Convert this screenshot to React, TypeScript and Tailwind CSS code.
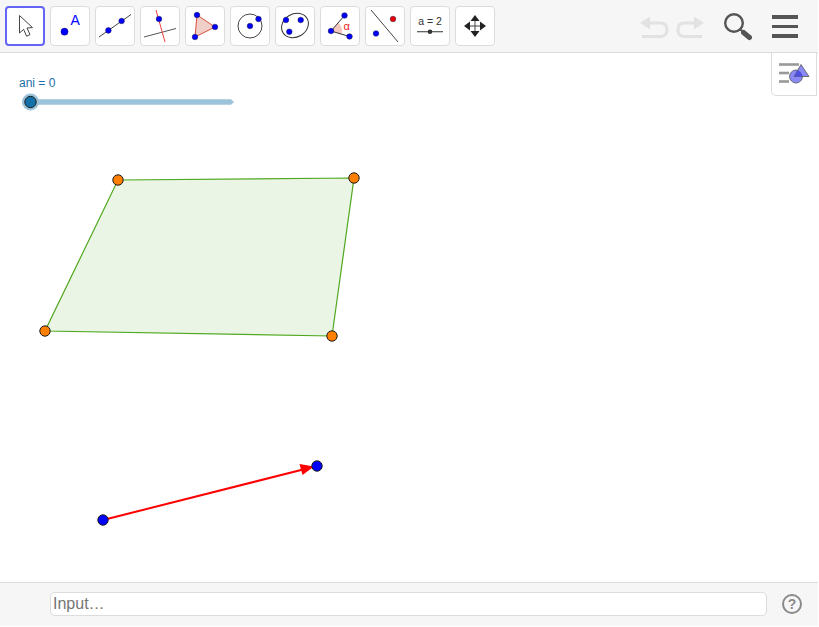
import type { ReactNode } from "react";

const BLUE = "#0000ff";

function Dot({ x, y, r = 2.8, fill = BLUE }: { x: number; y: number; r?: number; fill?: string }) {
  return <circle cx={x} cy={y} r={r} fill={fill} stroke="#1a1a40" strokeWidth={0.5} />;
}

// Toolbar icons, all drawn in a 40x40 box
const toolIcons: ReactNode[] = [
  <path key="move" d="M14.5 9.5 L14.5 27 L18.6 23.4 L21.6 30.2 L25 28.6 L22 22 L27.5 21.6 Z" fill="#fff" stroke="#444" strokeWidth={1} strokeLinejoin="round" />,
  <g key="point">
    <circle cx={14.5} cy={25.7} r={3.6} fill={BLUE} stroke="#1a1a40" strokeWidth={0.4} />
    <text x={20.5} y={19} fontSize={14} fill={BLUE} fontFamily="Liberation Sans, sans-serif">A</text>
  </g>,
  <g key="line">
    <line x1={4} y1={31} x2={36} y2={8.5} stroke="#444" strokeWidth={1} />
    <Dot x={13.4} y={24.4} />
    <Dot x={26.6} y={15} />
  </g>,
  <g key="perp">
    <line x1={4} y1={31} x2={36} y2={22.5} stroke="#555" strokeWidth={1} />
    <line x1={16} y1={4} x2={25} y2={36} stroke="#f04040" strokeWidth={1} />
    <Dot x={19} y={13} />
  </g>,
  <g key="polygon">
    <path d="M12 9 L30 21 L10 31 Z" fill="#f0cfc8" stroke="#d9503a" strokeWidth={1} />
    <Dot x={12} y={9} />
    <Dot x={30} y={21} />
    <Dot x={10} y={31} />
  </g>,
  <g key="circle">
    <circle cx={20} cy={20} r={12} fill="none" stroke="#444" strokeWidth={1} />
    <Dot x={20} y={20} />
    <Dot x={28.5} y={13} />
  </g>,
  <g key="conic">
    <ellipse cx={20} cy={19.5} rx={14} ry={11.5} transform="rotate(-30 20 19.5)" fill="none" stroke="#333" strokeWidth={1} />
    <Dot x={11} y={14} />
    <Dot x={25.7} y={14} />
    <Dot x={14.3} y={25.7} />
  </g>,
  <g key="angle">
    <path d="M11 25 L18.2 16.7 A11 11 0 0 1 21.5 28.1 Z" fill="#f4c8c0" stroke="none" />
    <line x1={11} y1={25} x2={24.5} y2={9.5} stroke="#333" strokeWidth={1} />
    <line x1={11} y1={25} x2={29.5} y2={30.5} stroke="#333" strokeWidth={1} />
    <Dot x={11} y={25} />
    <Dot x={24.5} y={9.5} />
    <Dot x={29.5} y={30.5} />
    <text x={23.5} y={23.5} fontSize={11} fill="#ee2222" fontFamily="Liberation Sans, sans-serif">α</text>
  </g>,
  <g key="mirror">
    <line x1={6} y1={4} x2={33} y2={36} stroke="#444" strokeWidth={1} />
    <Dot x={28} y={13} fill="#ee0000" />
    <Dot x={11} y={27.5} />
  </g>,
  <g key="slider">
    <text x={20} y={18.5} fontSize={10.5} fill="#333" textAnchor="middle" fontFamily="Liberation Sans, sans-serif">a = 2</text>
    <line x1={7} y1={25.7} x2={33} y2={25.7} stroke="#555" strokeWidth={1.2} />
    <circle cx={20} cy={25.7} r={2.3} fill="#333" />
  </g>,
  <g key="pan" fill="#222">
    <line x1={20} y1={13} x2={20} y2={27} stroke="#444" strokeWidth={1} />
    <line x1={13} y1={20} x2={27} y2={20} stroke="#444" strokeWidth={1} />
    <path d="M20 9 L24.5 15 L15.5 15 Z" />
    <path d="M20 31 L24.5 25 L15.5 25 Z" />
    <path d="M9 20 L15 15.5 L15 24.5 Z" />
    <path d="M31 20 L25 15.5 L25 24.5 Z" />
  </g>,
];

function ToolButton({ active, children }: { active?: boolean; children: ReactNode }) {
  return (
    <button
      className={
        active
          ? "h-10 w-10 shrink-0 rounded-[4px] border-2 border-[#6565f5] bg-white"
          : "h-10 w-10 shrink-0 rounded-[4px] border border-[#dcdcdc] bg-white"
      }
    >
      <svg viewBox="0 0 40 40" className={active ? "-m-[2px] h-10 w-10" : "-m-px h-10 w-10"}>
        {children}
      </svg>
    </button>
  );
}

function Toolbar() {
  return (
    <div className="flex h-[53px] shrink-0 items-start border-b border-[#dcdcdc] bg-[#f6f6f6] pl-[5px] pt-[6px]">
      <div className="flex gap-[5px]">
        {toolIcons.map((icon, i) => (
          <ToolButton key={i} active={i === 0}>
            {icon}
          </ToolButton>
        ))}
      </div>
      <div className="ml-auto flex items-start pr-[20px]">
        <svg width="64" height="22" viewBox="0 0 64 22" className="mt-[10px]" fill="none">
          <path d="M8 7 H20 Q27 7 27 13.7 Q27 20.5 20 20.5 H2" stroke="#e2e2e2" strokeWidth={3} />
          <path d="M0 7 L10 0.5 L10 13.5 Z" fill="#e2e2e2" />
          <path d="M56 7 H44 Q38 7 38 13.7 Q38 20.5 44 20.5 H62" stroke="#e2e2e2" strokeWidth={3} />
          <path d="M64 7 L54 0.5 L54 13.5 Z" fill="#e2e2e2" />
        </svg>
        <svg width="28" height="28" viewBox="0 0 28 28" className="ml-[20px] mt-[7px]" fill="none">
          <circle cx={10} cy={10} r={8.8} stroke="#555" strokeWidth={2.4} />
          <line x1={16.5} y1={16.5} x2={19} y2={19} stroke="#555" strokeWidth={2} />
          <line x1={19.5} y1={19.5} x2={25.5} y2={24.5} stroke="#555" strokeWidth={5} strokeLinecap="round" />
        </svg>
        <div className="ml-[20px] mt-[9px] flex w-[26px] flex-col gap-[6px]">
          <div className="h-[3.5px] bg-[#555]" />
          <div className="h-[3.5px] bg-[#555]" />
          <div className="h-[3.5px] bg-[#555]" />
        </div>
      </div>
    </div>
  );
}

function GeoPoint({ x, y, fill }: { x: number; y: number; fill: string }) {
  return <circle cx={x} cy={y} r={5.2} fill={fill} stroke="#1c1c1c" strokeWidth={1} />;
}

// Coordinates here are page pixels minus the 53px toolbar
function Drawing() {
  const dy = -53;
  return (
    <svg width="818" height="529" viewBox="0 0 818 529" className="absolute inset-0">
      <g transform={`translate(0 ${dy})`}>
        <polygon points="118,180 354,178 332,336 45,331" fill="#eaf5e6" stroke="#4fa81e" strokeWidth={1.2} />
        <GeoPoint x={118} y={180} fill="#ff7f00" />
        <GeoPoint x={354} y={178} fill="#ff7f00" />
        <GeoPoint x={332} y={336} fill="#ff7f00" />
        <GeoPoint x={45} y={331} fill="#ff7f00" />
        <line x1={103} y1={520} x2={305} y2={469} stroke="#ff0000" strokeWidth={2} />
        <path d="M314 466.6 L299.5 464 L302.5 475 Z" fill="#ff0000" />
        <GeoPoint x={103} y={520} fill={BLUE} />
        <GeoPoint x={317} y={466} fill={BLUE} />
      </g>
    </svg>
  );
}

function Slider() {
  return (
    <div className="absolute left-[19px] top-[23px] flex flex-col">
      <span className="text-[12px] leading-[14px] text-[#1a6ea8]">ani = 0</span>
      <div className="relative mt-[2px] h-[20px] w-[216px]">
        <svg width="216" height="20" viewBox="0 0 216 20">
          <path d="M11 7.2 H212 L215 10 L212 12.8 H11 Z" fill="#9cc3d9" />
          <circle cx={11.5} cy={10} r={8.5} fill="#9cc3d9" />
          <circle cx={11.5} cy={10} r={5.7} fill="#1470a8" stroke="#1c1c1c" strokeWidth={1} />
        </svg>
      </div>
    </div>
  );
}

function StylePanelButton() {
  return (
    <button className="absolute right-px top-0 flex h-[43px] w-[46px] items-center justify-center rounded-bl-[5px] border-b border-l border-r border-[#dcdcdc] bg-white">
      <svg width="32" height="24" viewBox="0 0 32 24">
        <defs>
          <clipPath id="style-circle">
            <circle cx={18} cy={14.5} r={6.5} />
          </clipPath>
        </defs>
        <g fill="#9a9a9a">
          <rect x={1} y={1.2} width={20} height={2.6} />
          <rect x={1} y={9.7} width={10} height={2.6} />
          <rect x={1} y={18.2} width={10} height={2.6} />
        </g>
        <circle cx={18} cy={14.5} r={6.5} fill="#8a8af5" stroke="#555" strokeWidth={0.8} />
        <path d="M23 2.5 L31 14.5 L16 14.5 Z" fill="#8a8af5" stroke="#555" strokeWidth={0.8} />
        <path d="M23 2.5 L31 14.5 L16 14.5 Z" fill="#5050e0" clipPath="url(#style-circle)" />
      </svg>
    </button>
  );
}

function InputBar() {
  return (
    <div className="flex h-[44px] shrink-0 items-start border-t border-[#dcdcdc] bg-[#f6f6f6] pl-[50px] pt-[9px]">
      <div className="flex h-[24px] w-[717px] items-center rounded-[5px] border border-[#dcdcdc] bg-white pl-[2px] text-[16px] text-[#757575]">
        Input…
      </div>
      <svg width="22" height="22" viewBox="0 0 22 22" className="ml-[14px] mt-px" fill="none">
        <circle cx={11} cy={11} r={9} stroke="#8a8a8a" strokeWidth={2} />
        <text x={11} y={16} textAnchor="middle" fontSize={14} fontWeight={700} fill="#8a8a8a" fontFamily="Liberation Sans, sans-serif">?</text>
      </svg>
    </div>
  );
}

export default function App() {
  return (
    <div className="flex h-[626px] w-[818px] flex-col bg-white font-['Liberation_Sans',Arial,sans-serif]">
      <Toolbar />
      <div className="relative flex-1 overflow-hidden bg-white">
        <Drawing />
        <Slider />
        <StylePanelButton />
      </div>
      <InputBar />
    </div>
  );
}
